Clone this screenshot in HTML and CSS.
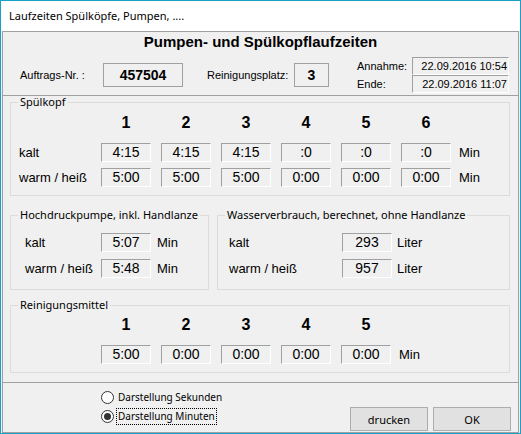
FILE: index.html
```html
<!DOCTYPE html>
<html lang="de">
<head>
<meta charset="utf-8">
<title>Laufzeiten</title>
<link rel="stylesheet" href="styles.css">
</head>
<body>
<div class="window">
  <div class="titlebar">Laufzeiten Spülköpfe, Pumpen, ....</div>
  <div class="frame">
    <div class="header">
      <div class="title">Pumpen- und Spülkopflaufzeiten</div>
      <div class="hrow">
        <span class="lbl-auftrag">Auftrags-Nr. :</span>
        <span class="hbox box-auftrag">457504</span>
        <span class="lbl-platz">Reinigungsplatz:</span>
        <span class="hbox box-platz">3</span>
        <div class="dates">
          <span class="dlbl">Annahme:</span><span class="dbox">22.09.2016 10:54</span>
          <span class="dlbl">Ende:</span><span class="dbox">22.09.2016 11:07</span>
        </div>
      </div>
    </div>
    <div class="main">
      <fieldset class="group g-spuel">
        <legend>Spülkopf</legend>
        <div class="grid">
          <span></span>
          <span class="colh">1</span><span class="colh">2</span><span class="colh">3</span>
          <span class="colh">4</span><span class="colh">5</span><span class="colh">6</span>
          <span></span>
          <span class="txt">kalt</span>
          <span class="val">4:15</span><span class="val">4:15</span><span class="val">4:15</span>
          <span class="val">:0</span><span class="val">:0</span><span class="val">:0</span>
          <span class="unit">Min</span>
          <span class="txt">warm / heiß</span>
          <span class="val">5:00</span><span class="val">5:00</span><span class="val">5:00</span>
          <span class="val">0:00</span><span class="val">0:00</span><span class="val">0:00</span>
          <span class="unit">Min</span>
        </div>
      </fieldset>
      <div class="pair">
        <fieldset class="group g-hd">
          <legend>Hochdruckpumpe, inkl. Handlanze</legend>
          <div class="grid">
            <span class="txt">kalt</span><span class="val">5:07</span><span class="txt">Min</span>
            <span class="txt">warm / heiß</span><span class="val">5:48</span><span class="txt">Min</span>
          </div>
        </fieldset>
        <fieldset class="group g-wasser">
          <legend>Wasserverbrauch, berechnet, ohne Handlanze</legend>
          <div class="grid">
            <span class="txt">kalt</span><span class="val">293</span><span class="txt">Liter</span>
            <span class="txt">warm / heiß</span><span class="val">957</span><span class="txt">Liter</span>
          </div>
        </fieldset>
      </div>
      <fieldset class="group g-rein">
        <legend>Reinigungsmittel</legend>
        <div class="grid">
          <span></span>
          <span class="colh">1</span><span class="colh">2</span><span class="colh">3</span>
          <span class="colh">4</span><span class="colh">5</span>
          <span></span>
          <span></span>
          <span class="val">5:00</span><span class="val">0:00</span><span class="val">0:00</span>
          <span class="val">0:00</span><span class="val">0:00</span>
          <span class="unit">Min</span>
        </div>
      </fieldset>
    </div>
    <div class="footer">
      <div class="radios">
        <div class="radio"><span class="circle"></span><span class="rtext">Darstellung Sekunden</span></div>
        <div class="radio"><span class="circle checked"></span><span class="rtext focus">Darstellung Minuten</span></div>
      </div>
      <div class="buttons">
        <button type="button">drucken</button>
        <button type="button">OK</button>
      </div>
    </div>
  </div>
</div>
</body>
</html>
```
FILE: styles.css
```css
body {
  margin: 0;
  background: #ffffff;
}

.window {
  width: 521px;
  height: 434px;
  box-sizing: border-box;
  border: 1px solid #17a0c8;
  background: #f0f0f0;
  display: flex;
  flex-direction: column;
  font-family: "Liberation Sans", Arial, sans-serif;
  color: #000;
}

.titlebar {
  flex: none;
  height: 30px;
  background: #ffffff;
  padding-left: 8px;
  font-family: "Noto Sans", sans-serif;
  font-size: 11px;
  line-height: 30px;
}

.frame {
  flex: none;
  margin: 0 1px;
  height: 402px;
  box-sizing: border-box;
  border: 1px solid #a0a0a0;
  display: flex;
  flex-direction: column;
}

.header {
  flex: none;
  height: 63px;
  border-bottom: 1px solid #a0a0a0;
}

.title {
  height: 25px;
  line-height: 20px;
  text-align: center;
  font-weight: bold;
  font-size: 15px;
}

.hrow {
  height: 36px;
  display: flex;
  align-items: center;
  padding-left: 17px;
  font-size: 11px;
}

.lbl-auftrag {
  width: 83px;
}

.hbox {
  box-sizing: border-box;
  height: 24px;
  border: 1px solid #a0a0a0;
  text-align: center;
  font-weight: bold;
  font-size: 14px;
  line-height: 22px;
}

.box-auftrag {
  width: 80px;
}

.lbl-platz {
  margin-left: 24px;
  width: 87px;
}

.box-platz {
  width: 35px;
}

.dates {
  margin-left: 28px;
  display: grid;
  grid-template-columns: 55px 97px;
  grid-template-rows: 18px 18px;
  align-items: center;
}

.dbox {
  box-sizing: border-box;
  height: 18px;
  border-top: 1px solid #a0a0a0;
  border-left: 1px solid #a0a0a0;
  border-right: 1px solid #ffffff;
  border-bottom: 1px solid #ffffff;
  text-align: right;
  padding-right: 1px;
  line-height: 16px;
}

.main {
  flex: 1;
  padding: 0 8px 0 7px;
}

.group {
  margin: 0;
  padding: 0;
  border: 1px solid #dcdcdc;
  min-width: 0;
  box-sizing: border-box;
}

.group legend {
  margin-left: 7px;
  padding: 0 2px;
  font-family: "Noto Sans", sans-serif;
  font-size: 11px;
  line-height: 12px;
}

.grid {
  display: grid;
  align-items: center;
}

.g-spuel .grid {
  padding: 0 0 8px 8px;
  grid-template-columns: 72px repeat(6, 50px) auto;
  grid-template-rows: 29px 19px 19px;
  column-gap: 10px;
  row-gap: 6px;
}

.colh {
  text-align: center;
  font-weight: bold;
  font-size: 16px;
}

.val {
  box-sizing: border-box;
  height: 19px;
  border-top: 1px solid #a0a0a0;
  border-left: 1px solid #a0a0a0;
  border-right: 1px solid #ffffff;
  border-bottom: 1px solid #ffffff;
  text-align: center;
  font-size: 14px;
  line-height: 17px;
}

.txt {
  font-size: 13px;
}

.unit {
  font-size: 13px;
  margin-left: -2px;
}

.pair {
  display: flex;
  gap: 8px;
  margin-top: 13px;
}

.g-hd {
  flex: none;
  width: 199px;
}

.g-hd .grid {
  padding: 12px 0 11px 14px;
  grid-template-columns: 70px 50px auto;
  grid-template-rows: 19px 19px;
  column-gap: 6px;
  row-gap: 7px;
}

.g-wasser {
  flex: 1;
}

.g-wasser .grid {
  padding: 12px 0 11px 11px;
  grid-template-columns: 108px 50px auto;
  grid-template-rows: 19px 19px;
  column-gap: 5px;
  row-gap: 7px;
}

.g-rein {
  margin-top: 9px;
}

.g-rein .grid {
  padding: 0 0 8px 8px;
  grid-template-columns: 72px repeat(5, 50px) auto;
  grid-template-rows: 28px 19px;
  column-gap: 10px;
  row-gap: 6px;
}

.footer {
  flex: none;
  height: 50px;
  box-sizing: border-box;
  border-top: 1px solid #a0a0a0;
  display: flex;
  padding-left: 98px;
}

.radios {
  padding-top: 5px;
}

.radio {
  display: flex;
  align-items: center;
  height: 19px;
  font-family: "Noto Sans", sans-serif;
  font-size: 10px;
}

.circle {
  width: 13px;
  height: 13px;
  box-sizing: border-box;
  border: 1px solid #333333;
  border-radius: 50%;
  background: #ffffff;
  margin-right: 3px;
  display: flex;
  align-items: center;
  justify-content: center;
}

.circle.checked::after {
  content: "";
  width: 7px;
  height: 7px;
  border-radius: 50%;
  background: #333333;
}

.rtext {
  padding: 0 1px;
  line-height: 15px;
}

.focus {
  outline: 1px dotted #000000;
}

.buttons {
  margin-left: auto;
  margin-right: 7px;
  margin-bottom: 1px;
  align-self: flex-end;
  display: flex;
  gap: 5px;
}

.buttons button {
  width: 78px;
  height: 24px;
  box-sizing: border-box;
  background: #e1e1e1;
  border: 1px solid #adadad;
  padding: 0;
  color: #000000;
  font-family: "Noto Sans", sans-serif;
  font-size: 11px;
}
```
